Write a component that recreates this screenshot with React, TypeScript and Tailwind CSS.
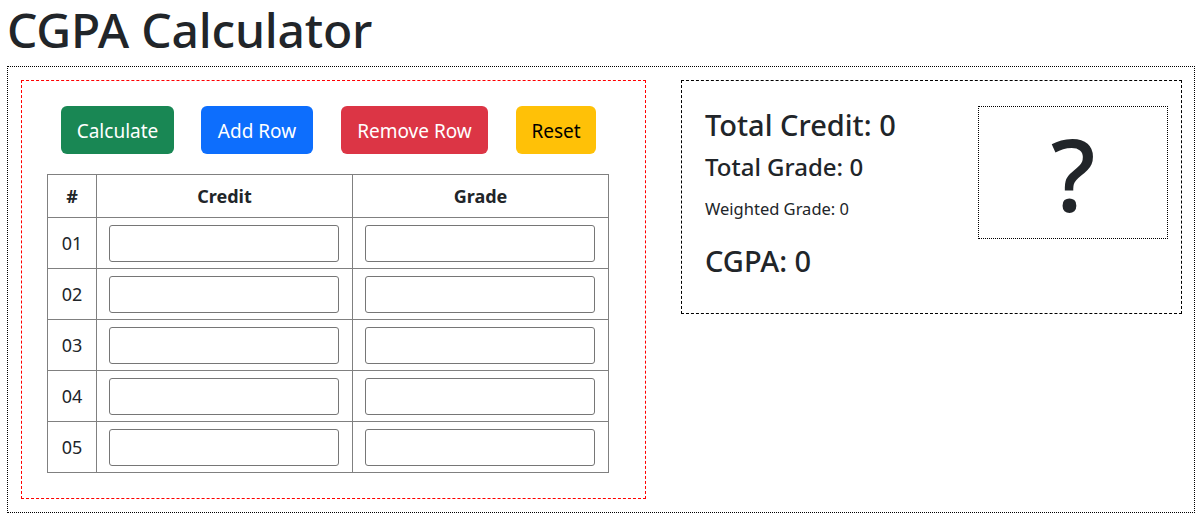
import React from "react";

const font = { fontFamily: '"Noto Sans", "Open Sans", sans-serif' };

function Row({ n }: { n: string }) {
  return (
    <tr className="h-[51px]">
      <td className="border border-[#808080] text-center text-[18px] text-[#212529]">{n}</td>
      <td className="border border-[#808080] pl-[12px] pr-[13px]">
        <input className="block w-[230px] h-[37px] border border-[#767676] rounded-[3px] bg-white" />
      </td>
      <td className="border border-[#808080] pl-[12px] pr-[13px]">
        <input className="block w-[230px] h-[37px] border border-[#767676] rounded-[3px] bg-white" />
      </td>
    </tr>
  );
}

export default function App() {
  return (
    <div className="bg-white w-[1203px] h-[521px] text-[#212529] pl-[7px]" style={font}>
      <h1 className="mb-[6px] text-[48px] font-medium leading-[60px] tracking-[-0.2px] whitespace-nowrap">CGPA Calculator</h1>
      <div className="w-[1188px] h-[447px] border border-dotted border-black pt-[13px] pl-[13px] flex items-start">
        <div className="w-[625px] h-[419px] border border-dashed border-[#ff0000] pt-[25px] pl-[25px]">
          <div className="flex pl-[14px] h-[48px]">
            <button className="w-[113px] h-[48px] pt-[2px] rounded-[6px] bg-[#198754] text-white text-[19px]">Calculate</button>
            <button className="ml-[27px] w-[112px] h-[48px] pt-[2px] rounded-[6px] bg-[#0d6efd] text-white text-[19px]">Add Row</button>
            <button className="ml-[28px] w-[147px] h-[48px] pt-[2px] rounded-[6px] bg-[#dc3545] text-white text-[19px]">Remove Row</button>
            <button className="ml-[28px] w-[80px] h-[48px] pt-[2px] rounded-[6px] bg-[#ffc107] text-black text-[19px]">Reset</button>
          </div>
          <table className="mt-[20px] border-collapse w-[561px] table-fixed">
            <colgroup>
              <col className="w-[49px]" />
              <col className="w-[256px]" />
              <col className="w-[256px]" />
            </colgroup>
            <thead>
              <tr className="h-[43px]">
                <th className="border border-[#808080] text-[18px] font-bold">#</th>
                <th className="border border-[#808080] text-[18px] font-bold">Credit</th>
                <th className="border border-[#808080] text-[18px] font-bold">Grade</th>
              </tr>
            </thead>
            <tbody>
              {["01", "02", "03", "04", "05"].map((n) => (
                <Row key={n} n={n} />
              ))}
            </tbody>
          </table>
        </div>
        <div className="ml-[35px] w-[501px] h-[234px] border border-dashed border-black flex justify-between pl-[23px] pr-[13px] pt-[25px]">
          <div className="pt-[2px]">
            <div className="text-[29px] font-medium leading-[34px]">Total Credit: 0</div>
            <div className="mt-[10px] text-[24px] font-medium leading-[30px]">Total Grade: 0</div>
            <div className="mt-[15px] text-[16.5px] leading-[24px]">Weighted Grade: 0</div>
            <div className="mt-[23px] text-[29px] font-medium leading-[34px]">CGPA: 0</div>
          </div>
          <div className="w-[190px] h-[133px] border border-dotted border-black flex items-center justify-center text-[100px] font-medium leading-none">
            ?
          </div>
        </div>
      </div>
    </div>
  );
}
